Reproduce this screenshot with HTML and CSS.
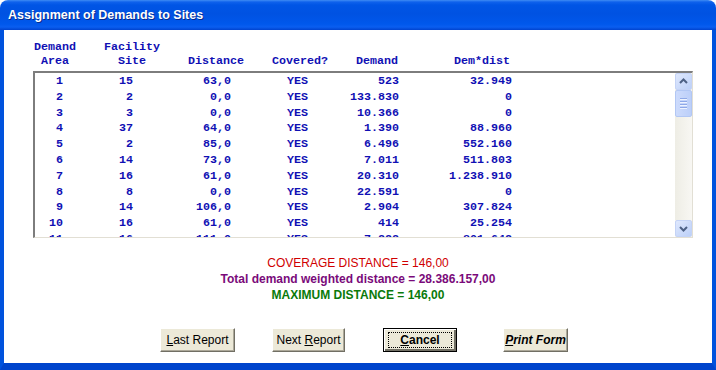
FILE: index.html
```html
<!DOCTYPE html>
<html>
<head>
<meta charset="utf-8">
<link rel="stylesheet" href="styles.css">
</head>
<body>
<div class="window">
  <div class="titlebar"><span class="title">Assignment of Demands to Sites</span></div>
  <div class="frame">
    <div class="head">
      <div class="hc">Demand<br>Area</div>
      <div class="hc">Facility<br>Site</div>
      <div class="hc single">Distance</div>
      <div class="hc single">Covered?</div>
      <div class="hc single">Demand</div>
      <div class="hc single last">Dem*dist</div>
    </div>
    <div class="listbox">
      <div class="rows">
        <div class="row"><span>1</span><span>15</span><span>63,0</span><span>YES</span><span>523</span><span>32.949</span></div>
        <div class="row"><span>2</span><span>2</span><span>0,0</span><span>YES</span><span>133.830</span><span>0</span></div>
        <div class="row"><span>3</span><span>3</span><span>0,0</span><span>YES</span><span>10.366</span><span>0</span></div>
        <div class="row"><span>4</span><span>37</span><span>64,0</span><span>YES</span><span>1.390</span><span>88.960</span></div>
        <div class="row"><span>5</span><span>2</span><span>85,0</span><span>YES</span><span>6.496</span><span>552.160</span></div>
        <div class="row"><span>6</span><span>14</span><span>73,0</span><span>YES</span><span>7.011</span><span>511.803</span></div>
        <div class="row"><span>7</span><span>16</span><span>61,0</span><span>YES</span><span>20.310</span><span>1.238.910</span></div>
        <div class="row"><span>8</span><span>8</span><span>0,0</span><span>YES</span><span>22.591</span><span>0</span></div>
        <div class="row"><span>9</span><span>14</span><span>106,0</span><span>YES</span><span>2.904</span><span>307.824</span></div>
        <div class="row"><span>10</span><span>16</span><span>61,0</span><span>YES</span><span>414</span><span>25.254</span></div>
        <div class="row"><span>11</span><span>16</span><span>111,0</span><span>YES</span><span>7.222</span><span>801.642</span></div>
      </div>
      <div class="scrollbar">
        <div class="sb-btn"><svg width="15" height="15" viewBox="0 0 15 15"><polyline points="4,9 7.5,5.5 11,9" fill="none" stroke="#4d6185" stroke-width="2"/></svg></div>
        <div class="sb-track">
          <div class="sb-thumb"><span class="grip"></span><span class="grip"></span><span class="grip"></span><span class="grip"></span></div>
        </div>
        <div class="sb-btn"><svg width="15" height="15" viewBox="0 0 15 15"><polyline points="4,6 7.5,9.5 11,6" fill="none" stroke="#4d6185" stroke-width="2"/></svg></div>
      </div>
    </div>
    <div class="summary">
      <div class="cov">COVERAGE DISTANCE = 146,00</div>
      <div class="total">Total demand weighted distance = 28.386.157,00</div>
      <div class="max">MAXIMUM DISTANCE = 146,00</div>
    </div>
    <div class="buttons">
      <button class="btn b-last"><span class="lbl"><u>L</u>ast Report</span></button>
      <button class="btn b-next"><span class="lbl">Next <u>R</u>eport</span></button>
      <button class="btn b-cancel"><span class="focus"><u>C</u>ancel</span></button>
      <button class="btn b-print"><span class="lbl"><u>P</u>rint Form</span></button>
    </div>
  </div>
</div>
</body>
</html>
```
FILE: styles.css
```css
html, body {
  margin: 0;
  padding: 0;
  background: #ffffff;
}
.window {
  width: 716px;
  height: 370px;
  display: flex;
  flex-direction: column;
  border-radius: 8px 8px 0 0;
  overflow: hidden;
  font-family: "Liberation Sans", Arial, sans-serif;
}
.titlebar {
  height: 30px;
  flex: none;
  display: flex;
  align-items: center;
  padding-left: 8px;
  padding-bottom: 1px;
  box-sizing: border-box;
  background: linear-gradient(to bottom, #3f8cf3 0px, #0f62ec 2px, #0055e5 5px, #0052e2 14px, #0058ec 24px, #0a5ef0 27px, #0043cf 30px);
}
.title {
  color: #ffffff;
  font-weight: bold;
  font-size: 12.5px;
  text-shadow: 1px 1px 0 #0a2a8a;
}
.frame {
  flex: 1;
  display: flex;
  flex-direction: column;
  background: #ffffff;
  border-left: 4px solid #0052dd;
  border-right: 4px solid #0052dd;
  border-bottom: 7px solid #0044cc;
}
.head {
  display: grid;
  grid-template-columns: 42px 56px 56px 56px 42px 84px;
  column-gap: 28px;
  margin: 10px 0 0 30px;
  font-family: "Liberation Mono", "Courier New", monospace;
  font-weight: bold;
  font-size: 11.67px;
  line-height: 14px;
  color: #1010b4;
}
.hc {
  text-align: center;
  white-space: nowrap;
}
.hc.single {
  align-self: end;
}
.hc.last {
  text-align: right;
}
.listbox {
  margin: 3px 0 0 29px;
  width: 660px;
  height: 167px;
  box-sizing: border-box;
  display: flex;
  border-top: 2px solid #7d7d7d;
  border-left: 2px solid #7d7d7d;
  border-right: 1px solid #e2dfd4;
  border-bottom: 1px solid #e2dfd4;
  background: #ffffff;
}
.rows {
  flex: 1;
  overflow: hidden;
  padding-top: 1px;
  font-family: "Liberation Mono", "Courier New", monospace;
  font-weight: bold;
  font-size: 11.67px;
  line-height: 15.8px;
  color: #1010b4;
}
.row {
  display: grid;
  grid-template-columns: 28px 70px 98px 77px 91px 113px;
  white-space: nowrap;
}
.row span {
  text-align: right;
}
.scrollbar {
  width: 17px;
  flex: none;
  display: flex;
  flex-direction: column;
  background: #f5f4ef;
}
.sb-btn {
  width: 17px;
  height: 17px;
  box-sizing: border-box;
  border: 1px solid #c4d3f6;
  border-radius: 2px;
  background: linear-gradient(to bottom right, #dfe8fd, #bcd0f8);
  display: flex;
  align-items: center;
  justify-content: center;
}
.sb-track {
  flex: 1;
  background: linear-gradient(to right, #eeede5, #f8f7f3);
}
.sb-thumb {
  height: 27px;
  box-sizing: border-box;
  border: 1px solid #b2c7f4;
  border-radius: 2px;
  background: linear-gradient(to right, #cddbfc, #bccff9);
  display: flex;
  flex-direction: column;
  align-items: center;
  justify-content: center;
  gap: 1px;
}
.grip {
  width: 7px;
  height: 1px;
  background: #8fa9e8;
  border-bottom: 1px solid #eef3ff;
}
.summary {
  margin-top: 17px;
  text-align: center;
  font-size: 12px;
  line-height: 16px;
}
.cov {
  color: #d00000;
}
.total {
  color: #7a0a7a;
  font-weight: bold;
}
.max {
  color: #0a7a0a;
  font-weight: bold;
}
.buttons {
  margin-top: 25px;
  padding-left: 156px;
  display: flex;
}
.btn {
  height: 24px;
  box-sizing: border-box;
  padding: 0;
  background: #ece9d8;
  font-family: "Liberation Sans", Arial, sans-serif;
  font-size: 12px;
  color: #000000;
  border: 1px solid;
  border-color: #ffffff #716f64 #716f64 #ffffff;
  box-shadow: inset -1px -1px 0 #aca899;
  display: flex;
  align-items: center;
  justify-content: center;
}
.lbl {
  white-space: pre;
}
.b-last {
  width: 75px;
}
.b-next {
  width: 73px;
  margin-left: 37px;
}
.b-cancel {
  width: 74px;
  margin-left: 38px;
  border: 1px solid #000000;
  box-shadow: inset 1px 1px 0 #ffffff, inset -2px -2px 0 #716f64;
  font-weight: bold;
}
.focus {
  display: flex;
  align-items: center;
  justify-content: center;
  width: 64px;
  height: 16px;
  box-sizing: border-box;
  border: 1px dotted #000000;
}
.b-print {
  width: 65px;
  margin-left: 46px;
  font-weight: bold;
  font-style: italic;
}
```
